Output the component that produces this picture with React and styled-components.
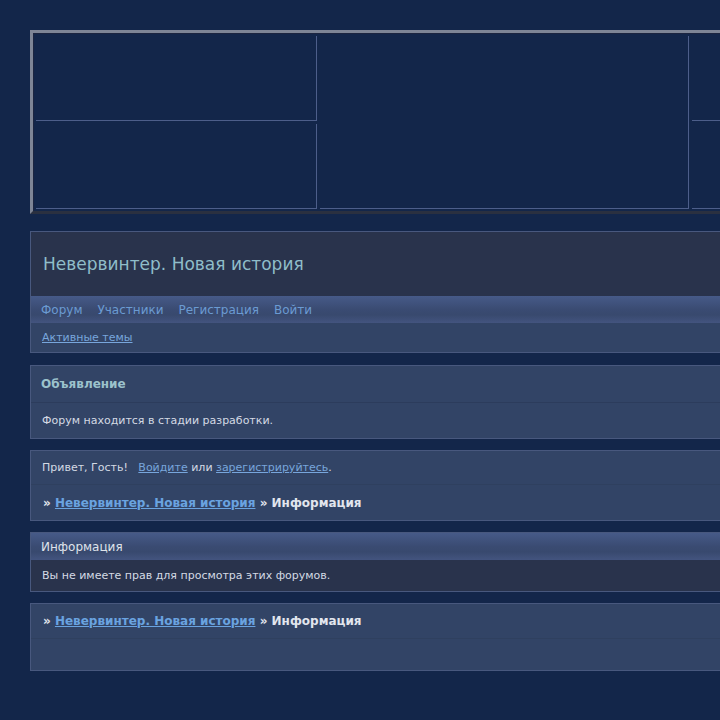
import styled, { createGlobalStyle } from "styled-components";

const Global = createGlobalStyle`
  html, body {
    margin: 0;
    padding: 0;
    background: #13264a;
    overflow: hidden;
  }
  body {
    font-family: "DejaVu Sans", Verdana, sans-serif;
    color: #d4dae4;
  }
`;

const Page = styled.div`
  width: 960px;
  padding: 30px 0 40px 30px;
`;

const Banner = styled.div`
  border-style: solid;
  border-width: 3px 0 3px 3px;
  border-color: #7e8596 transparent #2a3040 #7e8596;
  box-shadow: inset 1px 1px 0 #1c2540;
  padding: 3px 0 2px 3px;
  margin-bottom: 17px;
`;

const BannerGrid = styled.div`
  display: grid;
  grid-template-columns: 281px 369px 260px;
  grid-template-rows: 85px 85px;
  gap: 3px;
`;

const Cell = styled.div`
  border-right: ${(p) => (p.$noRight ? "none" : "1px solid #4d5e8a")};
  border-bottom: 1px solid #4d5e8a;
  grid-column: ${(p) => p.$col};
  grid-row: ${(p) => p.$row};
`;

const Box = styled.div`
  border: 1px solid #48587e;
  background: #324466;
  margin-bottom: ${(p) => p.$mb || 11}px;
`;

const TitleArea = styled.div`
  background: #29334c;
  height: 64px;
  display: flex;
  align-items: center;
  padding-left: 12px;
  font-size: 17px;
  color: #8fbdc9;
`;

const GradBar = styled.div`
  height: 27px;
  display: flex;
  align-items: center;
  padding-left: 10px;
  gap: 15px;
  background: linear-gradient(#465a88 0%, #3a4b72 50%, #38496e 70%, #43547f 100%);
`;

const NavLink = styled.a`
  font-size: 12px;
  color: #6b9bd2;
  text-decoration: none;
`;

const SubBar = styled.div`
  height: 29px;
  display: flex;
  align-items: center;
  padding-left: 11px;
  font-size: 11px;
`;

const Link = styled.a`
  color: ${(p) => (p.$strong ? "#6aa3e0" : "#78a6dc")};
  text-decoration: underline;
`;

const BoxHead = styled.div`
  height: 36px;
  display: flex;
  align-items: center;
  padding-left: 10px;
  font-size: 12px;
  font-weight: bold;
  color: #9cc2cc;
  border-bottom: 1px solid #2c3c5c;
`;

const Row = styled.div`
  height: ${(p) => p.$h || 35}px;
  display: flex;
  align-items: center;
  padding-left: 11px;
  font-size: 11px;
  color: #d4dae4;
  white-space: pre;
  border-bottom: ${(p) => (p.$sep ? "1px solid #2f405f" : "none")};
`;

const Crumb = styled.div`
  height: ${(p) => p.$h}px;
  display: flex;
  align-items: center;
  padding-left: 12px;
  font-size: 12px;
  font-weight: bold;
  color: #e2e6ee;
  white-space: pre;
  border-bottom: ${(p) => (p.$sep ? "1px solid #2f405f" : "none")};
`;

const InfoHead = styled(GradBar)`
  font-size: 12px;
  color: #dfe3ea;
`;

const DarkBody = styled.div`
  background: #29334c;
  height: 31px;
  display: flex;
  align-items: center;
  padding-left: 11px;
  font-size: 11px;
  color: #d4dae4;
`;

const Spacer = styled.div`
  height: ${(p) => p.$h}px;
`;

function Breadcrumb({ h, sep }) {
  return (
    <Crumb $h={h} $sep={sep}>
      » <Link $strong href="#">Невервинтер. Новая история</Link> » Информация
    </Crumb>
  );
}

export default function App() {
  return (
    <>
      <Global />
      <Page>
        <Banner>
          <BannerGrid>
            <Cell $col="1" $row="1" />
            <Cell $col="2" $row="1 / span 2" />
            <Cell $col="3" $row="1" $noRight />
            <Cell $col="1" $row="2" />
            <Cell $col="3" $row="2" $noRight />
          </BannerGrid>
        </Banner>

        <Box $mb={12}>
          <TitleArea>Невервинтер. Новая история</TitleArea>
          <GradBar>
            <NavLink href="#">Форум</NavLink>
            <NavLink href="#">Участники</NavLink>
            <NavLink href="#">Регистрация</NavLink>
            <NavLink href="#">Войти</NavLink>
          </GradBar>
          <SubBar>
            <Link href="#">Активные темы</Link>
          </SubBar>
        </Box>

        <Box>
          <BoxHead>Объявление</BoxHead>
          <Row $h={35}>Форум находится в стадии разработки.</Row>
        </Box>

        <Box>
          <Row $h={33} $sep>
            {"Привет, Гость!   "}
            <Link href="#">Войдите</Link>
            {" или "}
            <Link href="#">зарегистрируйтесь</Link>.
          </Row>
          <Breadcrumb h={35} />
        </Box>

        <Box>
          <InfoHead>Информация</InfoHead>
          <DarkBody>Вы не имеете прав для просмотра этих форумов.</DarkBody>
        </Box>

        <Box>
          <Breadcrumb h={34} sep />
          <Spacer $h={31} />
        </Box>
      </Page>
    </>
  );
}
